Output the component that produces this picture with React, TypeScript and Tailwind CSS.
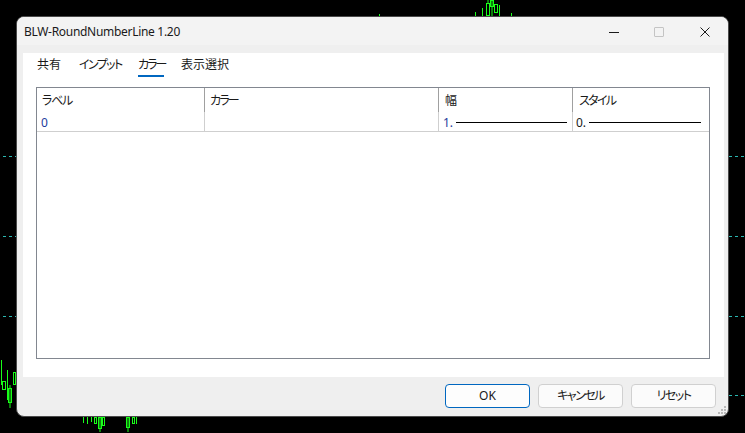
import React from "react";

const jp = {
  fontFamily: '"Noto Sans", "Noto Sans CJK JP", sans-serif',
  fontFeatureSettings: '"palt"',
};

function Chart() {
  const dash = (y: number, x1: number, x2: number) => (
    <line x1={x1} y1={y + 0.5} x2={x2} y2={y + 0.5} stroke="#2ab7b0" strokeWidth={1} strokeDasharray="3 3" />
  );
  const g = "#19ff19";
  return (
    <svg className="absolute inset-0" width={745} height={433} viewBox="0 0 745 433">
      {dash(156, 3, 16)}
      {dash(236, 3, 16)}
      {dash(316, 3, 16)}
      {dash(156, 729, 745)}
      {dash(236, 729, 745)}
      {dash(316, 729, 745)}
      {dash(395, 729, 745)}
      {/* top candles */}
      <line x1={379.5} y1={14} x2={379.5} y2={16} stroke={g} />
      <line x1={475.5} y1={12} x2={475.5} y2={16} stroke={g} />
      <line x1={482.5} y1={8} x2={482.5} y2={16} stroke={g} />
      <rect x={486.5} y={3.5} width={3} height={12} fill="none" stroke={g} />
      <line x1={488} y1={0} x2={488} y2={4} stroke={g} />
      <rect x={490.5} y={0.5} width={3} height={6} fill="none" stroke={g} />
      <line x1={492} y1={0} x2={492} y2={16} stroke={g} />
      <rect x={494.5} y={4.5} width={3} height={8} fill="none" stroke={g} />
      <line x1={499.5} y1={5} x2={499.5} y2={16} stroke={g} />
      <line x1={511.5} y1={13} x2={511.5} y2={16} stroke={g} />
      {/* left candles */}
      <line x1={1.5} y1={360} x2={1.5} y2={385} stroke={g} />
      <rect x={2.5} y={381.5} width={3} height={8} fill="none" stroke={g} />
      <line x1={7.5} y1={370} x2={7.5} y2={400} stroke={g} />
      <rect x={8.5} y={388.5} width={3} height={14} fill="none" stroke={g} />
      <line x1={10} y1={385} x2={10} y2={408} stroke={g} />
      <rect x={13.5} y={372.5} width={2} height={12} fill="none" stroke={g} />
      {/* bottom candles */}
      <line x1={83.5} y1={417} x2={83.5} y2={423} stroke={g} />
      <line x1={87.5} y1={417} x2={87.5} y2={424} stroke={g} />
      <line x1={91.5} y1={417} x2={91.5} y2={422} stroke={g} />
      <rect x={94.5} y={417.5} width={2} height={6} fill="none" stroke={g} />
      <rect x={98.5} y={417.5} width={3} height={11} fill="none" stroke={g} />
      <line x1={100} y1={417} x2={100} y2={432} stroke={g} />
      <rect x={102.5} y={417.5} width={2} height={8} fill="none" stroke={g} />
      <rect x={126.5} y={417.5} width={3} height={10} fill="none" stroke={g} />
      <line x1={128} y1={417} x2={128} y2={432} stroke={g} />
      <rect x={132.5} y={417.5} width={2} height={6} fill="none" stroke={g} />
      <line x1={136.5} y1={417} x2={136.5} y2={424} stroke={g} />
    </svg>
  );
}

function Grip() {
  const dots = [
    [7, 1],
    [4, 4],
    [7, 4],
    [1, 7],
    [4, 7],
    [7, 7],
  ];
  return (
    <svg width={10} height={10} viewBox="0 0 10 10" className="absolute right-[1px] bottom-[1px]">
      {dots.map(([x, y], i) => (
        <rect key={i} x={x} y={y} width={2} height={2} fill="#b8b8b8" />
      ))}
    </svg>
  );
}

export default function App() {
  return (
    <div className="relative w-[745px] h-[433px] bg-black overflow-hidden" style={jp}>
      <Chart />
      <div className="absolute left-[16px] top-[16px] w-[713px] h-[401px] rounded-[8px] border border-[#4a4a4a] bg-[#efefef] flex flex-col overflow-hidden">
        {/* title bar */}
        <div className="h-[28px] flex items-center bg-[#f3f3f3] shrink-0">
          <div className="pl-[7px] pt-[1px] text-[12px] tracking-[-0.3px] text-[#1a1a1a] flex-1 leading-none">BLW-RoundNumberLine 1.20</div>
          <div className="flex h-full">
            <div className="w-[46px] flex items-center justify-center">
              <div className="w-[10px] h-[1px] bg-[#1a1a1a] mt-[3px] ml-[1px]" />
            </div>
            <div className="w-[46px] flex items-center justify-center">
              <div className="w-[10px] h-[10px] border border-[#c4c4c4] rounded-[1px] mt-[2px]" />
            </div>
            <div className="w-[46px] flex items-center justify-center">
              <svg width={10} height={10} viewBox="0 0 10 10" className="mt-[2px]">
                <path d="M0.5 0.5 L9.5 9.5 M9.5 0.5 L0.5 9.5" stroke="#1a1a1a" strokeWidth={1} />
              </svg>
            </div>
          </div>
        </div>
        {/* white panel */}
        <div className="mt-[8px] ml-[6px] mr-[4px] h-[324px] bg-white flex flex-col shrink-0">
          <div className="flex pl-[14px] pt-[2px] h-[34px] text-[12px] text-[#1a1a1a]">
            <div className="w-[42px] h-[20px] flex items-center">共有</div>
            <div className="w-[59px] h-[20px] flex items-center tracking-[-1.6px]">インプット</div>
            <div className="w-[43px] flex flex-col">
              <div className="h-[20px] flex items-center tracking-[-2px]">カラー</div>
              <div className="w-[26px] h-[2px] bg-[#0067c0]" />
            </div>
            <div className="h-[20px] flex items-center">表示選択</div>
          </div>
          <div className="ml-[13px] mr-[14px] h-[272px] border border-[#828790] flex flex-col">
            <div className="flex h-[44px] border-b border-[#cfcfcf] text-[12px]">
              <div className="w-[168px] border-r border-[#cfcfcf] flex flex-col relative">
                <div className="h-[24px] flex items-center pl-[5px] pt-[2px] text-[#1a1a1a] tracking-[-1.3px]">ラベル</div>
                <div className="h-[19px] flex items-center pl-[4px] pt-[2px] text-[#1e3c9c]">0</div>
                <div className="absolute right-[-1px] top-0 h-[24px] w-[1px] bg-[#a0a0a0]" />
              </div>
              <div className="w-[234px] border-r border-[#cfcfcf] flex flex-col relative">
                <div className="h-[24px] flex items-center pl-[5px] pt-[2px] text-[#1a1a1a] tracking-[-1.8px]">カラー</div>
                <div className="absolute right-[-1px] top-0 h-[24px] w-[1px] bg-[#a0a0a0]" />
              </div>
              <div className="w-[134px] border-r border-[#cfcfcf] flex flex-col relative">
                <div className="h-[24px] flex items-center pl-[6px] pt-[2px] text-[#1a1a1a]">幅</div>
                <div className="h-[19px] flex items-center pl-[4px] pt-[2px] text-[#1e3c9c]">
                  <span>1.</span>
                  <div className="ml-[3px] w-[111px] h-[1px] bg-black" />
                </div>
                <div className="absolute right-[-1px] top-0 h-[24px] w-[1px] bg-[#a0a0a0]" />
              </div>
              <div className="flex-1 flex flex-col">
                <div className="h-[24px] flex items-center pl-[6px] pt-[2px] text-[#1a1a1a] tracking-[-1.7px]">スタイル</div>
                <div className="h-[19px] flex items-center pl-[3px] pt-[2px] text-[#1a1a1a]">
                  <span>0.</span>
                  <div className="ml-[3px] w-[112px] h-[1px] bg-black" />
                </div>
              </div>
            </div>
          </div>
        </div>
        {/* buttons */}
        <div className="flex justify-end gap-[8px] pr-[12px] pt-[7px] text-[12px] text-[#1a1a1a]">
          <button className="w-[85px] h-[24px] rounded-[4px] border border-[#0067c0] bg-[#fdfdfd] flex items-center justify-center" style={jp}>OK</button>
          <button className="w-[85px] h-[24px] rounded-[4px] border border-[#d0d0d0] bg-[#fbfbfb] flex items-center justify-center tracking-[-1.5px]" style={jp}>キャンセル</button>
          <button className="w-[85px] h-[24px] rounded-[4px] border border-[#d0d0d0] bg-[#fbfbfb] flex items-center justify-center tracking-[-1.5px]" style={jp}>リセット</button>
        </div>
        <Grip />
      </div>
    </div>
  );
}
